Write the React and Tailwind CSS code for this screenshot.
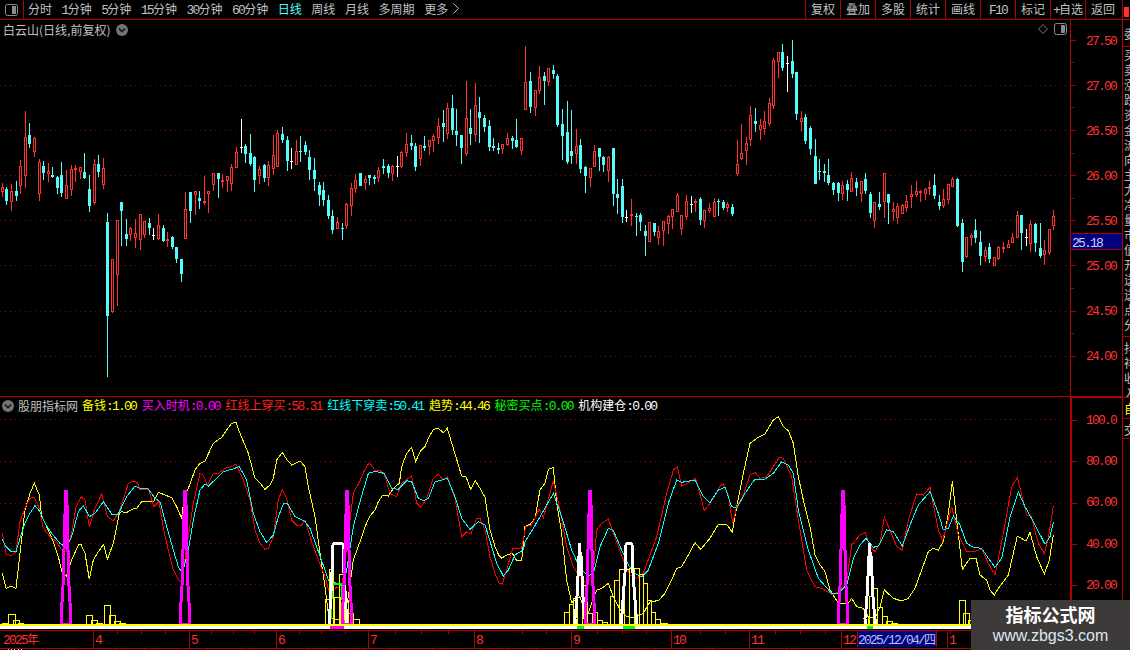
import React from 'react';

const NUM_FONT = "font-['Liberation_Mono'] tracking-[-1.8px] text-[13px]";

// candle data read off the chart: [x, high, bodyTop, bodyBottom, low, kind], three times real size
const CANDLES_A = [
  [7,430,442,455,470,'r'],[19,441,447,483,495,'c'],[34,432,454,485,513,'r'],[49,423,454,468,483,'c'],[61,360,378,437,462,'r'],
  [76,213,292,407,444,'r'],[88,250,285,312,324,'c'],[103,291,295,335,351,'r'],[118,358,367,461,483,'r'],[130,363,378,399,420,'c'],
  [145,370,393,402,426,'r'],[157,381,405,411,414,'c'],[172,408,411,444,462,'c'],[184,366,405,459,471,'c'],[199,390,436,476,476,'r'],
  [214,375,388,449,468,'r'],[226,376,384,390,426,'r'],[241,381,382,396,417,'r'],[253,339,396,414,417,'c'],[268,405,447,498,516,'c'],
  [283,357,373,489,495,'r'],[295,345,372,396,411,'c'],[310,354,385,434,447,'r'],[322,519,546,828,1011,'c'],[337,657,658,816,819,'r'],
  [352,540,541,705,798,'r'],[364,486,486,513,618,'c'],[379,537,582,597,618,'c'],[391,561,564,585,603,'r'],[406,537,580,594,624,'r'],
  [421,522,523,599,630,'r'],[433,543,544,585,594,'r'],[448,534,549,564,585,'c'],[460,564,585,588,600,'w'],[475,522,556,597,600,'r'],
  [490,556,564,603,606,'c'],[502,576,598,603,621,'r'],[517,588,591,621,627,'c'],[529,621,621,657,669,'c'],[544,657,657,702,726,'c'],
  [556,457,508,597,597,'r'],[571,456,456,513,549,'c'],[586,454,454,465,525,'r'],[598,454,474,483,507,'c'],[613,408,484,489,495,'r'],
  [625,454,454,461,519,'r'],[640,400,400,434,453,'r'],[655,399,399,417,474,'c'],[667,403,420,426,444,'r'],[682,408,408,423,456,'r'],
  [694,372,382,431,453,'r'],[709,321,336,384,384,'r'],[724,237,322,324,339,'w'],[736,312,318,342,369,'c'],[751,282,339,372,378,'c'],
  [763,348,351,420,456,'c'],[778,378,388,407,432,'r'],[793,372,375,414,426,'c'],[805,363,375,414,438,'r'],[820,285,345,387,406,'r'],
  [832,270,280,381,381,'r'],[847,262,282,300,309,'c'],[862,288,300,363,393,'c'],[874,324,364,366,387,'w'],[889,300,334,375,375,'r'],
  [901,288,333,335,366,'c'],[916,303,315,336,345,'c'],[928,330,351,390,420,'c'],[943,354,390,417,453,'c'],[958,426,435,465,498,'c'],
  [970,426,450,480,498,'c'],[985,465,480,528,537,'c'],[997,510,528,570,582,'c'],[1012,531,546,567,567,'r'],[1027,549,564,567,600,'c'],
  [1039,489,492,558,567,'r'],[1054,429,445,498,528,'r'],[1066,402,421,446,459,'r'],
];
const CANDLES_B = [
  [0,399,399,437,438,'c'],[16,407,418,428,450,'r'],[28,405,405,414,436,'c'],[43,405,411,416,432,'c'],[55,381,390,414,426,'r'],
  [70,357,378,384,402,'c'],[85,372,378,400,415,'c'],[97,376,378,402,423,'r'],[112,348,379,381,411,'w'],[124,333,336,381,384,'r'],
  [139,279,312,339,351,'r'],[154,285,309,318,331,'c'],[166,309,318,381,393,'c'],[181,315,316,357,378,'r'],[193,288,318,324,333,'c'],
  [208,300,300,321,345,'r'],[220,282,288,303,336,'r'],[235,234,259,294,312,'r'],[250,210,249,261,306,'c'],[262,189,204,282,297,'r'],
  [277,165,204,270,285,'c'],[289,207,273,285,318,'c'],[304,285,285,324,372,'c'],[319,123,234,342,348,'r'],[331,207,264,282,315,'c'],
  [346,129,195,285,306,'r'],[358,171,216,234,309,'c'],[373,225,234,261,276,'c'],[388,240,258,321,333,'c'],[400,294,318,324,333,'c'],
  [415,309,324,330,342,'c'],[427,312,312,327,342,'r'],[442,279,294,315,318,'r'],[457,288,294,303,327,'c'],[469,237,300,321,324,'c'],
  [484,294,294,333,345,'r'],[496,18,126,210,210,'r'],[511,96,123,201,219,'c'],[526,150,150,204,228,'r'],[538,78,111,153,162,'r'],
  [553,96,108,123,195,'c'],[565,84,84,126,138,'r'],[580,75,90,102,117,'c'],[592,102,108,255,261,'c'],[607,207,252,288,360,'c'],
  [622,183,276,366,372,'c'],[634,210,333,348,372,'c'],[649,267,318,342,372,'r'],[661,297,315,387,399,'c'],[676,378,381,408,459,'c'],
  [691,384,384,414,441,'r'],[703,315,333,381,381,'r'],[718,324,324,351,393,'c'],[730,348,351,375,396,'c'],[745,348,351,393,426,'r'],
  [760,324,324,462,498,'c'],[772,417,462,474,522,'c'],[787,417,438,531,549,'c'],[799,510,531,533,546,'w'],[814,477,522,527,558,'r'],
  [829,519,529,531,588,'c'],[841,519,525,546,573,'c'],[856,555,573,588,648,'c'],[868,546,547,605,605,'r'],[883,549,549,576,588,'c'],
  [895,558,573,594,615,'r'],[910,543,544,573,618,'r'],[925,525,528,552,582,'r'],[937,507,508,530,567,'r'],[952,459,465,516,516,'r'],
  [964,526,526,567,585,'r'],[979,465,484,531,540,'r'],[994,468,492,494,519,'w'],[1006,477,483,489,516,'r'],[1021,471,477,540,555,'c'],
  [1033,510,511,543,564,'r'],[1048,489,504,513,519,'r'],[1063,474,486,531,531,'r'],[1075,477,483,486,528,'c'],
];
const CANDLES_C = [
  [10,510,516,534,540,'c'],[22,516,522,534,546,'r'],[37,522,531,552,558,'c'],[52,330,402,432,438,'r'],[64,282,369,387,390,'r'],
  [79,321,339,362,405,'r'],[91,228,255,330,348,'r'],[106,234,273,282,306,'c'],[121,267,286,300,330,'r'],[133,243,273,297,315,'r'],
  [148,205,219,282,288,'r'],[160,84,90,228,237,'r'],[175,66,66,96,144,'r'],[187,42,66,114,123,'c'],[202,78,99,102,186,'w'],
  [217,30,93,132,144,'c'],[229,126,126,252,270,'c'],[244,243,264,276,303,'r'],[256,252,261,333,342,'c'],[271,288,294,357,375,'c'],
  [286,327,378,462,462,'c'],[298,387,424,426,450,'c'],[313,402,423,429,456,'c'],[325,387,435,459,465,'c'],[340,456,459,480,495,'c'],
  [355,456,459,489,513,'c'],[367,453,465,492,510,'r'],[382,450,462,480,513,'c'],[394,426,444,486,486,'r'],[409,444,456,474,498,'c'],
  [424,453,453,492,516,'r'],[436,429,447,483,492,'c'],[451,486,492,549,564,'c'],[463,516,516,573,594,'r'],[478,486,522,531,540,'c'],
  [493,429,429,516,564,'r'],[505,492,492,519,582,'c'],[520,516,537,546,573,'r'],[532,519,528,564,582,'r'],[547,522,525,552,552,'r'],
  [559,495,513,534,546,'r'],[574,465,492,501,534,'r'],[589,453,483,495,501,'r'],[601,480,483,484,516,'r'],[616,474,477,492,510,'r'],
  [628,453,471,477,495,'r'],[643,432,465,498,507,'c'],[658,495,516,528,540,'c'],[670,477,507,528,534,'r'],[685,462,462,510,522,'r'],
  [697,441,447,471,471,'r'],[712,444,447,588,591,'c'],[727,567,579,696,726,'c'],[739,621,621,681,684,'r'],[754,609,615,624,648,'r'],
  [766,567,600,624,639,'c'],[781,603,636,678,705,'c'],[796,651,660,681,696,'r'],[808,639,651,687,699,'c'],[823,682,682,708,708,'r'],
  [835,648,651,687,690,'r'],[850,636,652,654,669,'r'],[865,630,642,654,654,'r'],[877,609,621,639,639,'r'],[892,543,555,624,624,'r'],
  [904,555,555,609,660,'c'],[919,597,621,623,648,'w'],[931,570,582,642,666,'r'],[946,579,582,639,666,'c'],[961,579,654,678,684,'c'],
  [973,630,660,675,705,'r'],[988,597,597,669,675,'r'],[1000,540,558,588,600,'r'],
];

const scaleCandles = (list, ox, oy) =>
  list.map(([x, h, t, b, l, k]) => [
    ox + Math.floor(x / 3),
    oy + Math.round(h / 3),
    oy + Math.round(t / 3),
    oy + Math.round(b / 3),
    oy + Math.round(l / 3),
    k,
  ]);

const CANDLES = [
  ...scaleCandles(CANDLES_A, 0, 40),
  ...scaleCandles(CANDLES_B, 360, 40),
  ...scaleCandles(CANDLES_C, 720, 30),
];

// indicator lines, also three times real size, in three stretches
const pts = (a, b, c) => {
  const out = [];
  [[a, 0], [b, 360], [c, 720]].forEach(([list, ox]) => {
    for (let i = 0; i < list.length; i += 2) out.push(`${ox + list[i] / 3},${410 + list[i + 1] / 3}`);
  });
  return out.join(' ');
};

const YELLOW_LINE = pts(
  [7,490,18,535,33,528,48,535,60,430,75,300,90,250,103,220,118,255,125,320,140,350,160,395,175,440,187,490,199,498,215,450,235,405,243,403,255,430,268,508,280,450,295,425,311,403,322,448,340,400,358,310,365,305,380,308,395,298,410,295,425,275,445,273,462,273,475,247,495,255,515,263,530,290,545,325,553,260,565,235,585,180,600,160,615,153,640,100,665,82,680,60,695,40,708,37,720,70,745,130,765,205,780,218,795,238,810,225,820,205,830,150,847,127,860,148,875,165,900,153,915,170,925,230,945,320,960,430,975,530,985,610,1000,628,1030,630,1045,560,1060,450],
  [0,395,15,350,30,318,45,300,55,275,68,256,85,258,100,235,118,220,125,170,140,130,155,112,167,155,180,125,195,110,205,85,220,58,235,55,250,68,262,55,280,115,305,198,318,200,332,238,346,212,360,235,375,262,390,360,405,410,417,437,425,445,440,435,457,430,470,452,485,452,495,350,510,343,525,325,540,240,555,220,565,178,580,172,590,280,605,370,620,510,635,578,645,570,660,560,672,600,680,625,695,580,710,540,725,535,745,520,760,560,780,598,800,620,820,622,850,610,870,575,895,572,915,550,935,510,950,475,965,470,985,435,1005,398,1022,418,1050,385,1075,343],
  [0,345,20,343,37,367,50,290,70,190,90,100,110,85,135,72,160,30,175,20,190,50,205,62,220,100,235,200,250,270,270,350,285,435,300,465,315,485,330,540,355,580,385,580,395,565,410,590,430,595,445,620,465,625,480,590,493,540,520,565,545,573,565,565,585,535,605,480,625,425,640,415,655,420,670,395,685,310,697,213,710,330,727,478,750,445,768,445,780,495,800,510,810,540,823,555,835,535,865,495,880,430,892,378,918,393,930,367,950,440,973,492,988,450,1000,375]
);
const RED_LINE = pts(
  [7,370,18,432,33,437,48,425,60,335,75,295,90,265,103,262,118,295,130,355,150,380,170,395,185,420,199,425,215,370,228,290,243,260,255,270,268,350,285,295,305,252,322,320,340,332,358,305,385,220,400,213,412,218,420,240,445,237,462,290,477,275,490,355,505,420,520,480,535,510,545,515,565,380,580,280,600,190,610,195,622,225,640,190,655,190,675,175,695,170,708,162,730,210,750,270,765,360,780,400,795,418,805,415,820,380,835,270,847,238,860,265,875,330,890,345,905,345,915,330,935,395,955,450,975,500,990,555,1010,530,1025,540,1035,450,1060,250],
  [0,212,15,178,28,157,45,180,60,182,72,190,90,250,110,260,125,220,155,198,170,280,183,292,200,265,220,205,235,193,250,210,262,200,285,265,305,380,320,365,333,372,350,325,360,325,375,360,390,440,405,490,417,520,427,522,440,480,458,415,485,415,497,350,515,345,537,298,550,323,580,212,600,300,620,410,640,470,665,510,680,520,700,490,710,360,725,340,745,327,770,395,790,450,810,495,830,505,850,490,890,380,920,250,940,180,952,170,965,228,985,218,1007,205,1033,302,1050,280,1075,240],
  [0,228,10,222,25,255,38,340,50,290,70,255,90,195,105,187,120,205,140,200,160,170,178,142,190,145,215,200,235,330,260,480,285,530,305,535,340,555,355,545,380,515,395,405,420,375,435,367,450,410,465,425,480,400,493,322,510,360,530,410,547,420,565,330,590,252,610,255,630,232,655,360,668,392,695,290,715,375,740,425,760,425,785,418,805,460,825,495,850,370,875,230,892,203,920,315,933,317,955,400,973,430,985,385,1000,288]
);
const CYAN_LINE = pts(
  [7,388,18,410,33,425,48,425,60,385,75,340,90,310,105,287,120,305,135,340,155,370,180,400,199,412,215,380,235,305,250,287,268,320,285,310,310,275,335,312,355,312,380,260,405,228,420,235,445,237,465,265,480,275,500,350,520,420,535,470,547,490,565,420,580,330,600,240,615,222,625,228,650,205,670,185,695,178,718,170,740,210,760,310,780,365,800,398,820,375,835,320,850,282,862,280,885,320,915,335,930,355,950,410,975,480,985,510,1010,520,1028,530,1040,480,1060,350],
  [0,275,25,190,45,184,72,190,95,235,115,238,140,212,155,215,175,265,190,272,205,265,225,215,245,210,262,205,285,260,305,325,330,358,355,335,375,345,395,410,410,460,430,498,445,480,465,435,490,420,495,395,520,355,540,320,580,250,605,320,635,420,660,475,685,498,700,490,720,410,745,355,760,362,785,420,805,465,825,490,845,500,865,480,895,400,925,280,950,210,965,217,1005,210,1030,260,1050,278,1075,240],
  [0,238,15,232,35,290,50,295,75,250,105,207,135,207,160,190,185,155,205,165,220,190,235,300,265,420,295,505,335,550,355,550,380,525,400,445,420,405,438,385,460,412,475,408,500,360,520,365,547,408,570,345,595,285,630,245,655,310,670,360,685,355,700,318,720,345,740,400,760,412,785,415,805,445,825,472,845,445,870,320,895,245,915,290,940,335,975,403,990,380,1000,337]
);

// yellow outlined histogram: [left, right, top] in real x, top three times real size from 410
const HIST = [
  [2,7,640],[8,15,613],[13,19,631],[18,23,640],[86,92,616],[91,97,631],[96,102,640],[104,110,586],[109,115,616],[114,120,634],[119,125,640],
  [325,330,568],[329,333,478],[334,340,562],[339,344,492],[343,348,570],[348,353,610],[353,359,628],
  [564,569,608],[569,573,582],[573,577,566],[577,582,490],[582,587,525],[587,592,610],[593,597,606],[597,602,632],[602,607,638],
  [610,614,558],[614,619,510],[619,624,477],[624,629,477],[629,634,475],[634,639,475],[639,643,492],[643,647,520],[647,651,570],[651,655,608],[655,660,627],[660,667,640],
  [865,868,620],[869,873,560],[873,877,535],[877,882,592],[882,887,618],[886,892,634],[891,897,640],[959,965,571],[963,969,610],[968,971,630],
];

const spike = (cx, top, bottom, w) => {
  const h = bottom - top;
  const steps = [[0, 0], [0.11, 0.16], [0.31, 0.33], [0.71, 0.66], [0.9, 1], [1, 1]];
  const left = steps.map(([f, d]) => `${cx - d * w},${top + f * h}`);
  const right = steps.map(([f, d]) => `${cx + d * w},${top + f * h}`).reverse();
  return [...left, ...right.slice(0, -1)].join(' ');
};

const tower = (cx, top, bottom, w1, w2) =>
  `${cx - w2},${bottom} ${cx - w1 - 1},${top + 30} ${cx - w1},${top + 2} ${cx - w1 + 1},${top} ${cx + w1 - 1},${top} ${cx + w1},${top + 2} ${cx + w1 + 1},${top + 30} ${cx + w2},${bottom}`;

const NAV_ITEMS = ['分时', '1分钟', '5分钟', '15分钟', '30分钟', '60分钟', '日线', '周线', '月线', '多周期', '更多'];
const TOOL_ITEMS = ['复权', '叠加', '多股', '统计', '画线', 'F10', '标记', '+自选', '返回'];
const LEGEND = [
  { label: '备钱', value: '1.00', color: 'text-[#ffff00]' },
  { label: '买入时机', value: '0.00', color: 'text-[#ff00ff]' },
  { label: '红线上穿买', value: '58.31', color: 'text-[#ff2020]' },
  { label: '红线下穿卖', value: '50.41', color: 'text-[#00ffff]' },
  { label: '趋势', value: '44.46', color: 'text-[#ffff00]' },
  { label: '秘密买点', value: '0.00', color: 'text-[#00ff00]' },
  { label: '机构建仓', value: '0.00', color: 'text-white' },
];
const UPPER_AXIS = ['27.50', '', '27.00', '', '26.50', '', '26.00', '', '25.50', '', '25.00', '', '24.50', '', '24.00'];
const LOWER_AXIS = ['100.0', '80.00', '60.00', '40.00', '20.00'];
const MONTHS = [
  { label: '2025年', width: 'w-[93px] pl-[3px]' },
  { label: '4', width: 'w-[96px] pl-[1px] border-l border-[#b00000]' },
  { label: '5', width: 'w-[87px] pl-[1px] border-l border-[#b00000]' },
  { label: '6', width: 'w-[92px] pl-[1px] border-l border-[#b00000]' },
  { label: '7', width: 'w-[106px] pl-[1px] border-l border-[#b00000]' },
  { label: '8', width: 'w-[97px] pl-[1px] border-l border-[#b00000]' },
  { label: '9', width: 'w-[100px] pl-[1px] border-l border-[#b00000]' },
  { label: '10', width: 'w-[78px] pl-[1px] border-l border-[#b00000]' },
  { label: '11', width: 'w-[92px] pl-[1px] border-l border-[#b00000]' },
  { label: '12', width: 'w-[16px] pl-[1px] border-l border-[#b00000] whitespace-nowrap' },
];
const AXIS_TICKS = [117,141,165,211,233,254,299,321,345,395,421,448,522,546,597,622,646,700,725,775,800,825,950];
const BOTTOM_STUBS = [8,11,14,18,21,42,73,115,144,177,207,241,282,308,334,364,390,432,480,508,536,600,655,712,786,846,885,1000];
const GRID_UPPER = [85, 130, 175, 220, 265, 311, 356];
const GRID_LOWER = [419, 461, 503, 543, 584];
const MAGENTA_SPIKES = [66, 185, 347, 590, 843];

// ascii runs get the narrow digit font, chinese stays at the normal font
const Txt = ({ children }) => {
  const parts = String(children).match(/[\x00-\x7f]+|[^\x00-\x7f]+/g) || [];
  return parts.map((part, i) =>
    /^[\x00-\x7f]/.test(part) ? (
      <span key={i} className={NUM_FONT}>{part}</span>
    ) : (
      <span key={i}>{part}</span>
    )
  );
};

const DownCircle = () => (
  <svg width="12" height="12" viewBox="0 0 12 12" className="shrink-0">
    <circle cx="6" cy="6" r="6" fill="#737373" />
    <path d="M3 4.5 L6 7.5 L9 4.5" stroke="#151515" strokeWidth="1.6" fill="none" />
  </svg>
);

const PanelIcon = () => (
  <svg width="13" height="12" viewBox="0 0 13 12">
    <rect x="0.5" y="0.5" width="12" height="11" rx="2" fill="none" stroke="#8c8c8c" />
    <rect x="7" y="2" width="4" height="8" fill="#8c8c8c" />
  </svg>
);

const Candle = ({ candle }) => {
  const [x, high, top, bottom, low, kind] = candle;
  const color = kind === 'r' ? '#ff3232' : kind === 'c' ? '#54fcfc' : '#ffffff';
  return (
    <g>
      <rect x={x} y={high} width="1" height={Math.max(low - high, 1)} fill={color} />
      {kind === 'c' && <rect x={x - 1} y={top} width="3" height={Math.max(bottom - top, 1)} fill={color} />}
      {kind === 'r' && (
        <rect x={x - 0.5} y={top + 0.5} width="2" height={Math.max(bottom - top - 1, 1)} fill="#000" stroke={color} />
      )}
      {kind === 'w' && <rect x={x - 1} y={top} width="3" height="1" fill={color} />}
    </g>
  );
};

const PriceChart = () => (
  <svg width="1070" height="376" viewBox="0 20 1070 376" shapeRendering="crispEdges" className="block">
    {GRID_UPPER.map((y) => (
      <line key={y} x1="0" x2="1070" y1={y + 0.5} y2={y + 0.5} stroke="#8a0000" strokeDasharray="1 4" />
    ))}
    {CANDLES.map((c, i) => (
      <Candle key={i} candle={c} />
    ))}
  </svg>
);

const IndicatorChart = () => (
  <svg width="1070" height="233" viewBox="0 397 1070 233" shapeRendering="crispEdges" className="block">
    {GRID_LOWER.map((y) => (
      <line key={y} x1="0" x2="1070" y1={y + 0.5} y2={y + 0.5} stroke="#a00000" strokeDasharray="1 4" />
    ))}
    <polyline points={YELLOW_LINE} fill="none" stroke="#ffff00" />
    <polyline points={RED_LINE} fill="none" stroke="#ff0000" />
    <polyline points={CYAN_LINE} fill="none" stroke="#00ffff" />
    {HIST.map(([l, r, t], i) => (
      <polyline key={i} points={`${l},625 ${l},${410 + t / 3} ${r},${410 + t / 3} ${r},625`} fill="none" stroke="#ffff00" />
    ))}
    <polyline points={tower(337, 584, 625, 5, 7)} fill="none" stroke="#00ff00" strokeWidth="2" />
    <polyline points={tower(338, 543, 627, 5, 9)} fill="none" stroke="#ffffff" strokeWidth="3" />
    <polyline points={tower(629, 543, 627, 3, 8)} fill="none" stroke="#ffffff" strokeWidth="3" />
    <polyline points={spike(580, 543, 627, 5)} fill="none" stroke="#ffffff" strokeWidth="3" />
    <polyline points={spike(870, 543, 627, 5)} fill="none" stroke="#ffffff" strokeWidth="3" />
    {MAGENTA_SPIKES.map((cx) => (
      <g key={cx}>
        <polyline points={spike(cx, 490, 624, 4.5)} fill="none" stroke="#ff00ff" strokeWidth="3" />
        <rect x={cx - 1} y="490" width="3" height="42" fill="#ff00ff" />
        <rect x={cx - 2} y="505" width="5" height="30" fill="#ff00ff" />
      </g>
    ))}
    <rect x="0" y="626" width="1070" height="3" fill="#ffffff" />
    <rect x="0" y="624" width="1070" height="2" fill="#ffff00" />
    <rect x="330" y="626" width="14" height="3" fill="#ff00ff" />
    <rect x="577" y="626" width="7" height="3" fill="#00ff00" />
    <rect x="623" y="626" width="12" height="3" fill="#00ff00" />
    <rect x="867" y="626" width="6" height="3" fill="#00ff00" />
  </svg>
);

const StripCell = ({ chars, className = '' }) => (
  <div className={`border-b border-[#b00000] overflow-hidden pl-[1px] leading-[15px] ${className}`}>
    {chars.map((ch, i) => (
      <div key={i} className="w-[12px]">{ch}</div>
    ))}
  </div>
);

export default function App() {
  return (
    <div className="relative flex w-[1130px] h-[650px] bg-black overflow-hidden text-[12px] text-[#c0c0c0] font-['Noto_Sans_CJK_SC',sans-serif]">
      <div className="flex flex-col w-[1122px] shrink-0">
        {/* top menu bar */}
        <div className="flex h-[20px] border-b border-[#b00000] leading-[18px]">
          <div className="flex items-center justify-center w-[24px] border-r border-[#b00000]">
            <PanelIcon />
          </div>
          <div className="flex gap-[9.6px] pl-[4px]">
            {NAV_ITEMS.map((item) => (
              <span key={item} className={item === '日线' ? 'text-[#54fcfc]' : ''}>
                <Txt>{item}</Txt>
              </span>
            ))}
            <svg width="6" height="11" viewBox="0 0 6 11" className="-ml-[5px] mt-[3px]">
              <path d="M0.5 0.5 L5.5 5.5 L0.5 10.5" fill="none" stroke="#c0c0c0" />
            </svg>
          </div>
          <div className="flex ml-auto pr-[2px]">
            {TOOL_ITEMS.map((item) => (
              <div key={item} className="w-[35px] border-l border-[#b00000] text-center">
                <Txt>{item}</Txt>
              </div>
            ))}
          </div>
        </div>

        {/* price pane */}
        <div className="flex h-[377px] border-b border-[#b00000]">
          <div className="relative w-[1070px]">
            <PriceChart />
            <div className="absolute left-[3px] top-[2px] flex items-center gap-[6px] leading-[16px]">
              <span>白云山(日线,前复权)</span>
              <DownCircle />
            </div>
            <div className="absolute right-[3px] top-[3px] flex items-center gap-[6px]">
              <svg width="10" height="10" viewBox="0 0 10 10">
                <path d="M5 0.5 L9.5 5 L5 9.5 L0.5 5 Z" fill="none" stroke="#7a7a7a" />
              </svg>
              <PanelIcon />
            </div>
          </div>
          <div className="relative flex-1 border-l border-[#b00000] pt-[9px] text-[#ff3232]">
            {UPPER_AXIS.map((label, i) => (
              <div key={i} className="flex items-center h-[22.57px]">
                <div className={`h-px bg-[#b00000] ${label ? 'w-[5px]' : 'w-[3px]'}`} />
                {label && <span className={`ml-[10px] pt-[2px] ${NUM_FONT}`}>{label}</span>}
              </div>
            ))}
            <div className="absolute left-0 right-0 top-[213px] h-[17px] bg-[#000080] border-y border-[#b00000] leading-[15px] pl-[1px] text-[#c8d0f0]">
              <span className={NUM_FONT}>25.18</span>
            </div>
          </div>
        </div>

        {/* indicator pane */}
        <div className="flex h-[234px] border-b border-[#b00000]">
          <div className="relative w-[1070px]">
            <IndicatorChart />
            <div className="absolute left-[2px] top-0 flex items-center gap-[5.7px] leading-[16px]">
              <div className="flex items-center gap-[4px] -mr-[1.7px]">
                <DownCircle />
                <span>股朋指标网</span>
              </div>
              {LEGEND.map((item) => (
                <span key={item.label} className={item.color}>
                  <Txt>{`${item.label}:${item.value}`}</Txt>
                </span>
              ))}
            </div>
          </div>
          <div className="flex-1 border-l-2 border-t border-[#b00000] pt-[2px] text-[#ff3232]">
            {LOWER_AXIS.map((label) => (
              <div key={label} className="flex items-center h-[41.3px]">
                <div className="h-px w-[5px] bg-[#b00000]" />
                <span className={`ml-[9px] ${NUM_FONT}`}>{label}</span>
              </div>
            ))}
          </div>
        </div>

        {/* time axis */}
        <div className="relative flex h-[18px] border-b border-[#b00000] text-[#ff3232] leading-[16px]">
          {MONTHS.map((m) => (
            <div key={m.label} className={m.width}>
              <Txt>{m.label}</Txt>
            </div>
          ))}
          <div className="w-[80px] h-[16px] bg-[#000080] border-x border-[#b00000] text-[#b8c4f0] whitespace-nowrap">
            <Txt>2025/12/04/四</Txt>
          </div>
          <div className="w-[10px]" />
          <div className="border-l border-[#b00000] pl-[1px]">
            <Txt>1</Txt>
          </div>
          <svg width="1070" height="3" className="absolute left-0 top-0" shapeRendering="crispEdges">
            {AXIS_TICKS.map((x) => (
              <line key={x} x1={x + 0.5} x2={x + 0.5} y1="0" y2="3" stroke="#b00000" />
            ))}
          </svg>
        </div>
        <svg width="1122" height="1" className="block" shapeRendering="crispEdges">
          {BOTTOM_STUBS.map((x) => (
            <rect key={x} x={x} y="0" width="1" height="1" fill={x < 30 ? '#c0c0c0' : '#b00000'} />
          ))}
        </svg>
      </div>

      {/* clipped tab strip on the right edge */}
      <div className="flex flex-col flex-1 border-l border-[#b00000] overflow-hidden">
        <div className="h-[20px] border-b border-[#b00000] pl-px pt-[7px]">
          <div className="w-[5px] h-[10px] bg-[#ff3232]" />
        </div>
        <StripCell chars={['委']} className="h-[27px] pt-[6px]" />
        <StripCell
          chars={['买', '卖', '涨', '跌', '资', '金', '流', '向', '主', '力', '净', '量', '市', '值', '开', '送', '送', '点', '分']}
          className="h-[290px]"
        />
        <StripCell chars={['抖', '祥', '收', '入']} className="h-[61px] pt-[3px]" />
        <StripCell chars={['自']} className="h-[21px] pt-[3px] text-[#ffff00]" />
        <StripCell chars={['交']} className="h-[20px] pt-[3px]" />
      </div>

      {/* site stamp over the corner */}
      <div className="absolute left-[971px] top-[600px] w-[159px] h-[50px] bg-[#3e3a39] text-center">
        <div className="text-[18px] leading-[28px] font-bold text-white">指标公式网</div>
        <div className="-mt-[2px] text-[16px] leading-[20px] text-[#dce8f4] font-['Liberation_Sans']">www.zbgs3.com</div>
      </div>
    </div>
  );
}
